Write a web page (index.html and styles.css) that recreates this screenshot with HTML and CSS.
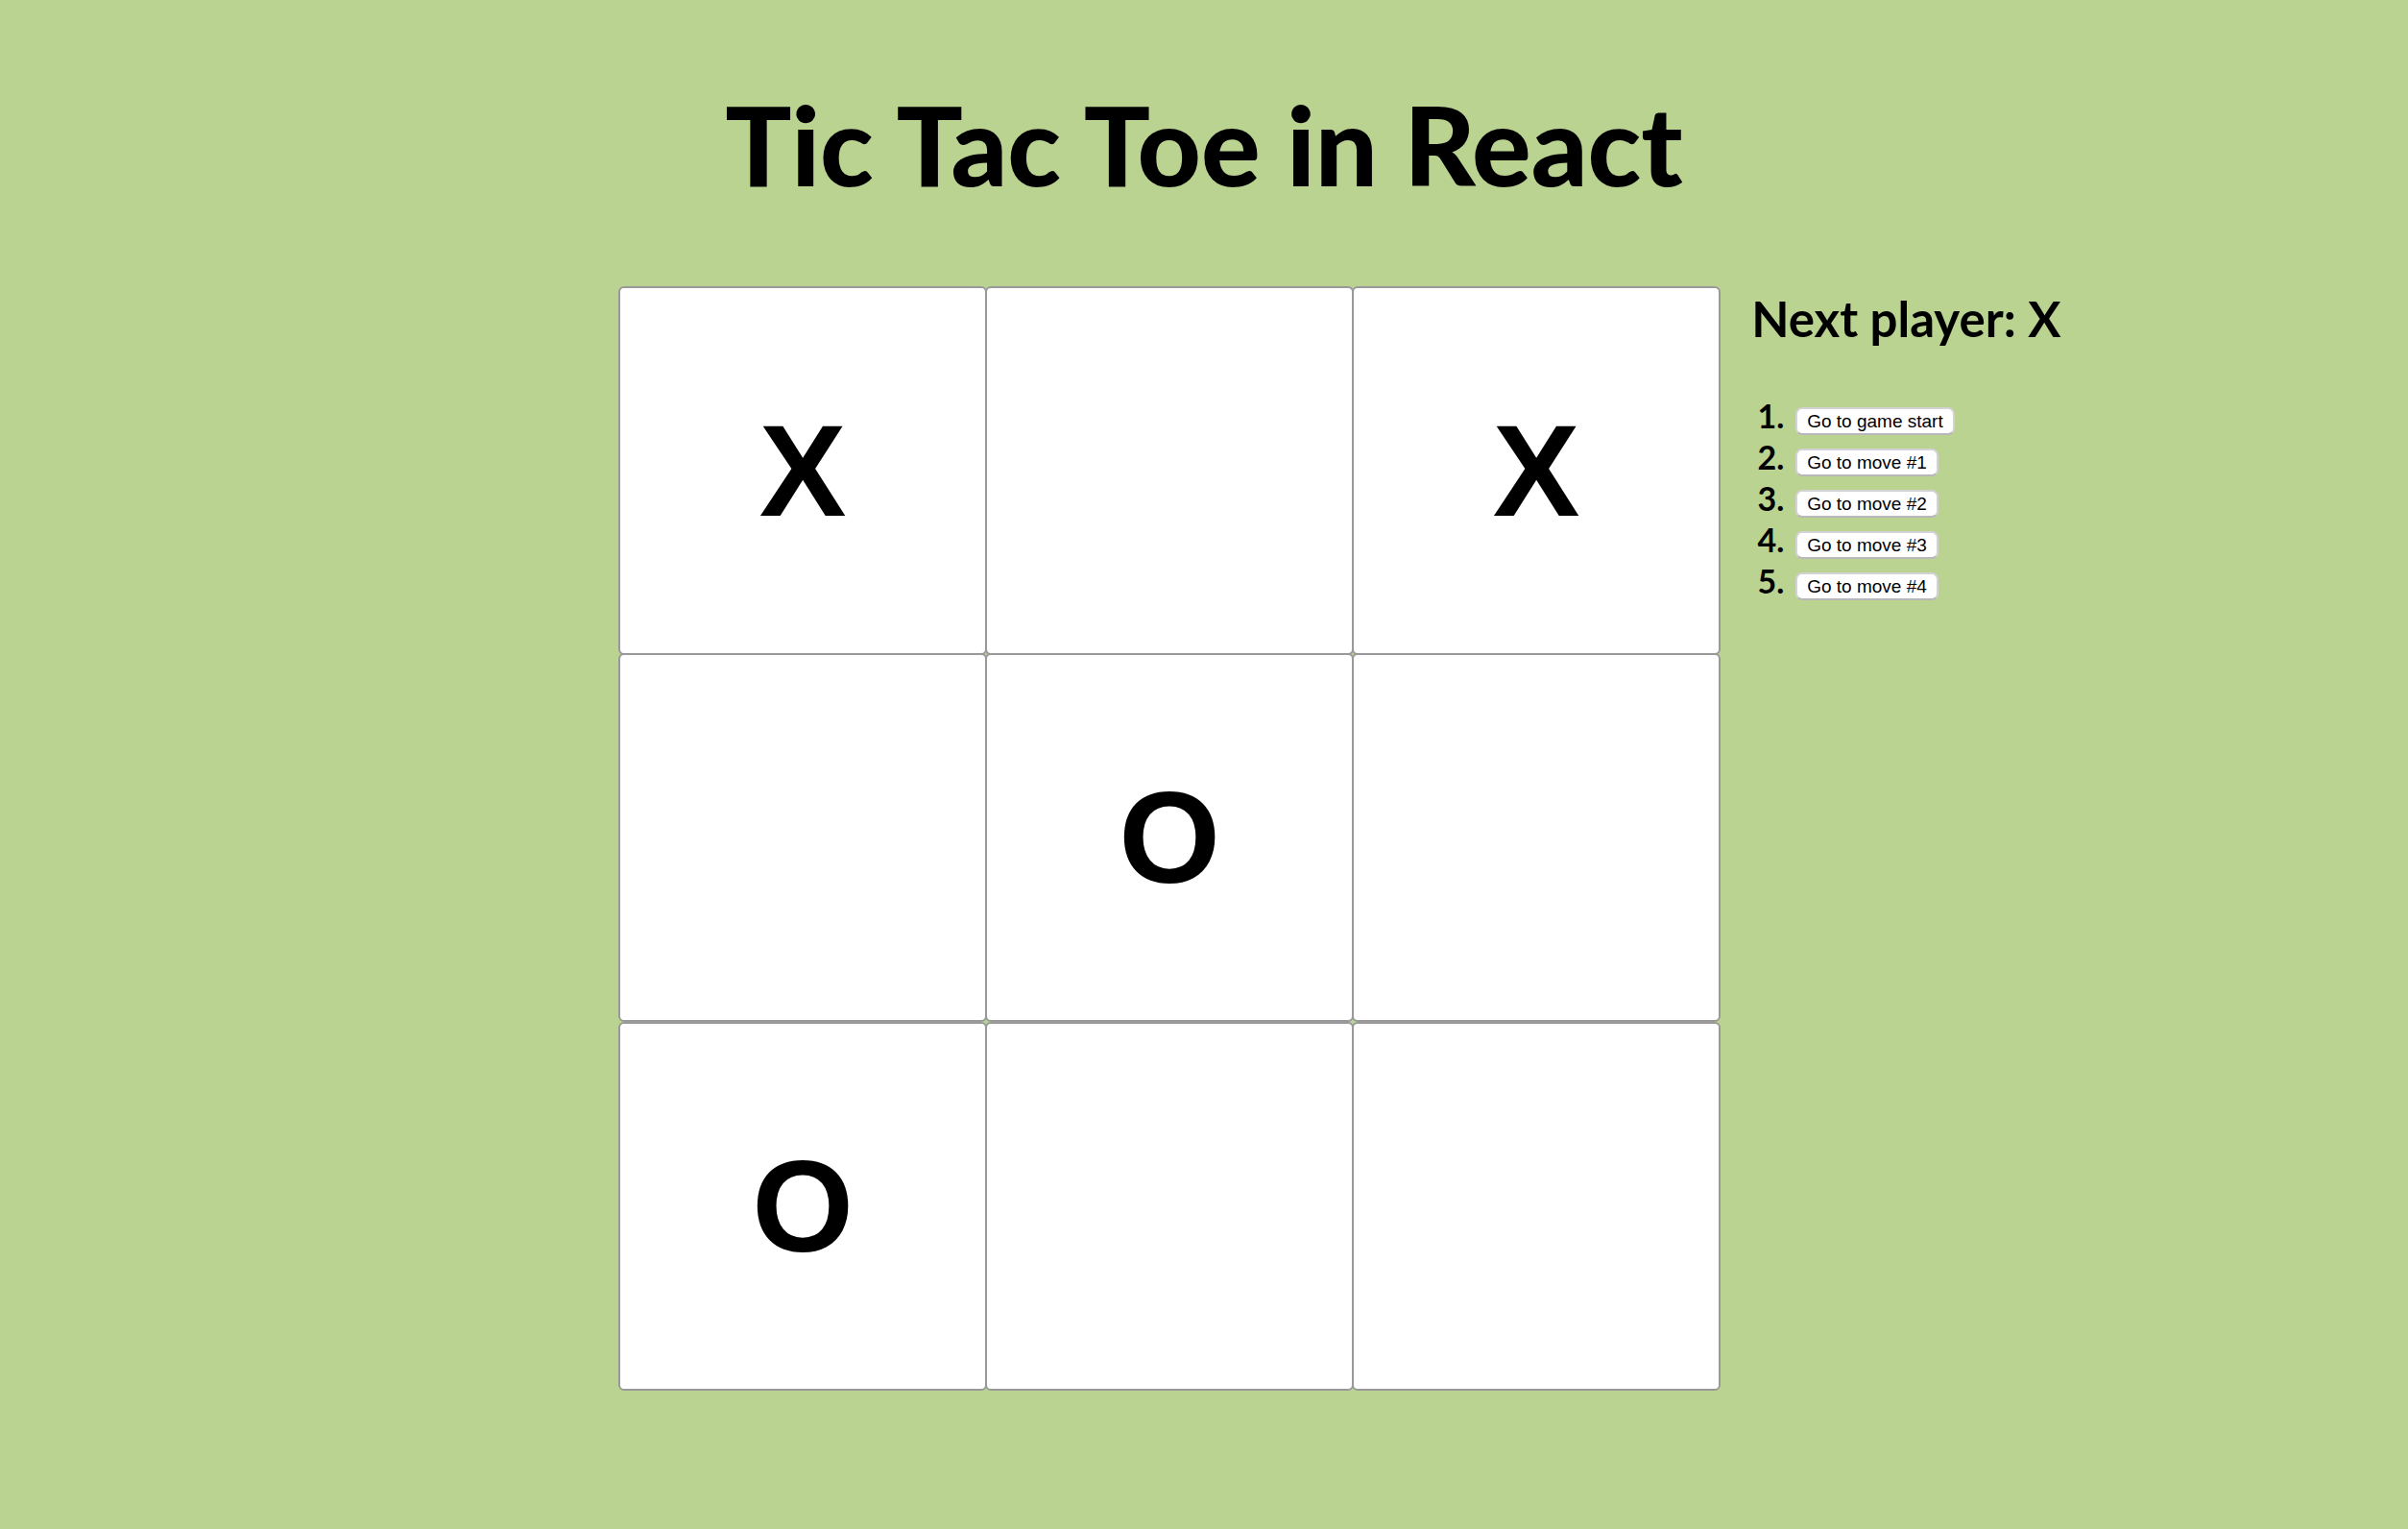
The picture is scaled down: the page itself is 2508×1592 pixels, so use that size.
FILE: index.html
```html
<!DOCTYPE html>
<html lang="en">
<head>
<meta charset="utf-8">
<meta name="viewport" content="width=device-width, initial-scale=1">
<title>Tic Tac Toe in React</title>
<link rel="stylesheet" href="styles.css">
</head>
<body>
<h1 class="title">Tic Tac Toe in React</h1>
<main class="game">
  <div class="board">
    <div class="board-row">
      <button class="square" type="button">X</button>
      <button class="square" type="button" aria-label="Empty"></button>
      <button class="square" type="button">X</button>
    </div>
    <div class="board-row">
      <button class="square" type="button" aria-label="Empty"></button>
      <button class="square" type="button">O</button>
      <button class="square" type="button" aria-label="Empty"></button>
    </div>
    <div class="board-row board-row-last">
      <button class="square" type="button">O</button>
      <button class="square" type="button" aria-label="Empty"></button>
      <button class="square" type="button" aria-label="Empty"></button>
    </div>
  </div>
  <div class="info">
    <div class="status">Next player: X</div>
    <ol class="moves">
      <li><button class="move" type="button">Go to game start</button></li>
      <li><button class="move" type="button">Go to move #1</button></li>
      <li><button class="move" type="button">Go to move #2</button></li>
      <li><button class="move" type="button">Go to move #3</button></li>
      <li><button class="move" type="button">Go to move #4</button></li>
    </ol>
  </div>
</main>
</body>
</html>
```

FILE: styles.css
```css
* {
  box-sizing: border-box;
}

body {
  margin: 0;
  padding: 76px 0 120px;
  background: #bad391;
  color: #000;
  font-family: Futura, Lato, sans-serif;
}

.title {
  margin: 0 0 76px;
  font-size: 115px;
  font-weight: 900;
  line-height: 146px;
  text-align: center;
}

.game {
  --square: min(384px, 16vw);
  display: grid;
  grid-template-columns: minmax(0, 9fr) auto minmax(0, 10fr);
}

.board {
  grid-column: 2;
}

.board-row {
  display: flex;
  margin-bottom: -2px;
}

.board-row-last {
  margin: 2px 0 0;
}

.square {
  width: var(--square);
  height: var(--square);
  margin: 0 -2px 0 0;
  padding: 0;
  border: 2px solid #999;
  border-radius: 6px;
  background: #fff;
  color: #000;
  font: bold 136px "Liberation Sans", Arial, sans-serif;
}

.square:last-child {
  margin-right: 0;
}

.info {
  padding-left: 32px;
}

.status {
  margin-top: 2px;
  font-size: 51px;
  font-weight: 700;
  line-height: 64px;
}

.moves {
  margin: 51px 0 0;
  padding: 0;
  list-style: none;
  counter-reset: move;
}

.moves li {
  display: flex;
  align-items: flex-start;
  gap: 12px;
  height: 43px;
  counter-increment: move;
}

.moves li::before {
  content: counter(move) ".";
  width: 34px;
  font-size: 34px;
  font-weight: 700;
  line-height: 36px;
  text-align: right;
}

.move {
  height: 29px;
  margin-top: 9px;
  padding: 0 10px;
  border: 2px solid #d3d3d6;
  border-bottom-color: #b8b8ba;
  border-radius: 7px;
  background: #fff;
  color: #000;
  font: 19px/24px "Liberation Sans", Arial, sans-serif;
}
```
